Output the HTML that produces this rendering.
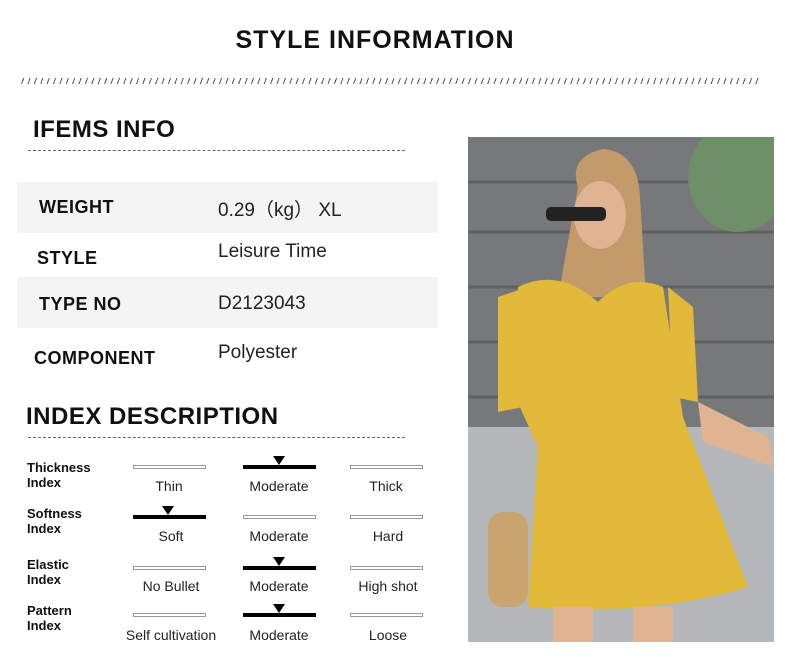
<!DOCTYPE html>
<html><head><meta charset="utf-8"><style>
*{margin:0;padding:0;box-sizing:border-box}
body{width:790px;height:664px;background:#fff;position:relative;overflow:hidden;font-family:"Liberation Sans","DejaVu Sans",sans-serif;color:#111}
.a{position:absolute}
.t{font-weight:bold}
.dash{position:absolute;border-top:1px dashed #666;height:0}
.row{position:absolute;left:17px;width:421px;height:51px}
.k{position:absolute;font-weight:bold;font-size:18px;letter-spacing:.5px}
.v{position:absolute;font-size:19px;color:#222}
.g{position:absolute;width:73px;height:4px;border:1px solid #999;background:#fff}
.b{position:absolute;width:73px;height:4px;background:#000}
.tri{position:absolute;width:0;height:0;border-left:6px solid transparent;border-right:6px solid transparent;border-top:9px solid #000}
.l{position:absolute;font-size:14px;width:110px;text-align:center;color:#222}
.il{position:absolute;left:27px;font-weight:bold;font-size:13px;line-height:15px}
</style></head><body>
<div class="a t" style="left:0;width:750px;top:26px;text-align:center;font-size:25px;letter-spacing:1px">STYLE INFORMATION</div>
<div class="a" style="left:20px;top:78px;width:740px;height:6px;background:repeating-linear-gradient(110deg,transparent 0 3px,#555 3px 4px,transparent 4px 6px)"></div>
<div class="a t" style="left:33px;top:116px;font-size:24px;letter-spacing:.5px">IFEMS INFO</div>
<div class="dash" style="left:28px;top:150px;width:377px"></div>
<div class="row" style="top:182px;background:#f4f4f4"></div>
<div class="row" style="top:277px;background:#f4f4f4"></div>
<div class="k" style="left:39px;top:197px">WEIGHT</div><div class="v" style="left:218px;top:195px">0.29（kg） XL</div>
<div class="k" style="left:37px;top:248px">STYLE</div><div class="v" style="left:218px;top:241px">Leisure Time</div>
<div class="k" style="left:39px;top:294px">TYPE NO</div><div class="v" style="left:218px;top:293px">D2123043</div>
<div class="k" style="left:34px;top:348px">COMPONENT</div><div class="v" style="left:218px;top:342px">Polyester</div>
<div class="a t" style="left:26px;top:403px;font-size:24px;letter-spacing:.5px">INDEX DESCRIPTION</div>
<div class="dash" style="left:28px;top:437px;width:377px"></div>

<div class="il" style="top:460px">Thickness<br>Index</div>
<div class="g" style="left:133px;top:465px"></div><div class="b" style="left:243px;top:465px"></div><div class="tri" style="left:273px;top:456px"></div><div class="g" style="left:350px;top:465px"></div>
<div class="l" style="left:114px;top:478px">Thin</div><div class="l" style="left:224px;top:478px">Moderate</div><div class="l" style="left:331px;top:478px">Thick</div>

<div class="il" style="top:506px">Softness<br>Index</div>
<div class="b" style="left:133px;top:515px"></div><div class="tri" style="left:162px;top:506px"></div><div class="g" style="left:243px;top:515px"></div><div class="g" style="left:350px;top:515px"></div>
<div class="l" style="left:116px;top:528px">Soft</div><div class="l" style="left:224px;top:528px">Moderate</div><div class="l" style="left:333px;top:528px">Hard</div>

<div class="il" style="top:557px">Elastic<br>Index</div>
<div class="g" style="left:133px;top:566px"></div><div class="b" style="left:243px;top:566px"></div><div class="tri" style="left:273px;top:557px"></div><div class="g" style="left:350px;top:566px"></div>
<div class="l" style="left:116px;top:578px">No Bullet</div><div class="l" style="left:224px;top:578px">Moderate</div><div class="l" style="left:333px;top:578px">High shot</div>

<div class="il" style="top:603px">Pattern<br>Index</div>
<div class="g" style="left:133px;top:613px"></div><div class="b" style="left:243px;top:613px"></div><div class="tri" style="left:273px;top:604px"></div><div class="g" style="left:350px;top:613px"></div>
<div class="l" style="left:106px;top:627px;width:130px">Self cultivation</div><div class="l" style="left:224px;top:627px">Moderate</div><div class="l" style="left:333px;top:627px">Loose</div>

<svg class="a" style="left:468px;top:137px" width="306" height="505" viewBox="0 0 306 505">
<rect width="306" height="505" fill="#77787a"/>
<g stroke="#5f6062" stroke-width="3"><line x1="0" y1="45" x2="306" y2="45"/><line x1="0" y1="95" x2="306" y2="95"/><line x1="0" y1="150" x2="306" y2="150"/><line x1="0" y1="205" x2="306" y2="205"/><line x1="0" y1="260" x2="306" y2="260"/></g>
<rect y="290" width="306" height="215" fill="#b5b8bb"/>
<ellipse cx="270" cy="40" rx="50" ry="55" fill="#6f8f68"/>
<path d="M110 50 Q100 20 135 12 Q170 15 172 60 L178 160 L90 160 Z" fill="#c39a6a"/>
<ellipse cx="132" cy="78" rx="26" ry="34" fill="#e0b393"/>
<rect x="78" y="70" width="60" height="14" fill="#222" rx="5"/>
<path d="M50 150 Q90 130 130 165 Q160 135 195 150 L215 280 L280 450 Q180 480 60 470 L70 310 L45 255 Z" fill="#e3b93a"/>
<path d="M30 160 L60 150 L55 270 L30 275 Z" fill="#e3b93a"/>
<path d="M200 150 L225 170 L230 265 L205 260 Z" fill="#e3b93a"/>
<path d="M230 265 L300 300 L306 330 L235 305 Z" fill="#e0b393"/>
<rect x="85" y="470" width="40" height="35" fill="#e0b393"/><rect x="165" y="470" width="40" height="35" fill="#e0b393"/>
<rect x="20" y="375" width="40" height="95" rx="15" fill="#c9a46e"/>
</svg>
</body></html>
